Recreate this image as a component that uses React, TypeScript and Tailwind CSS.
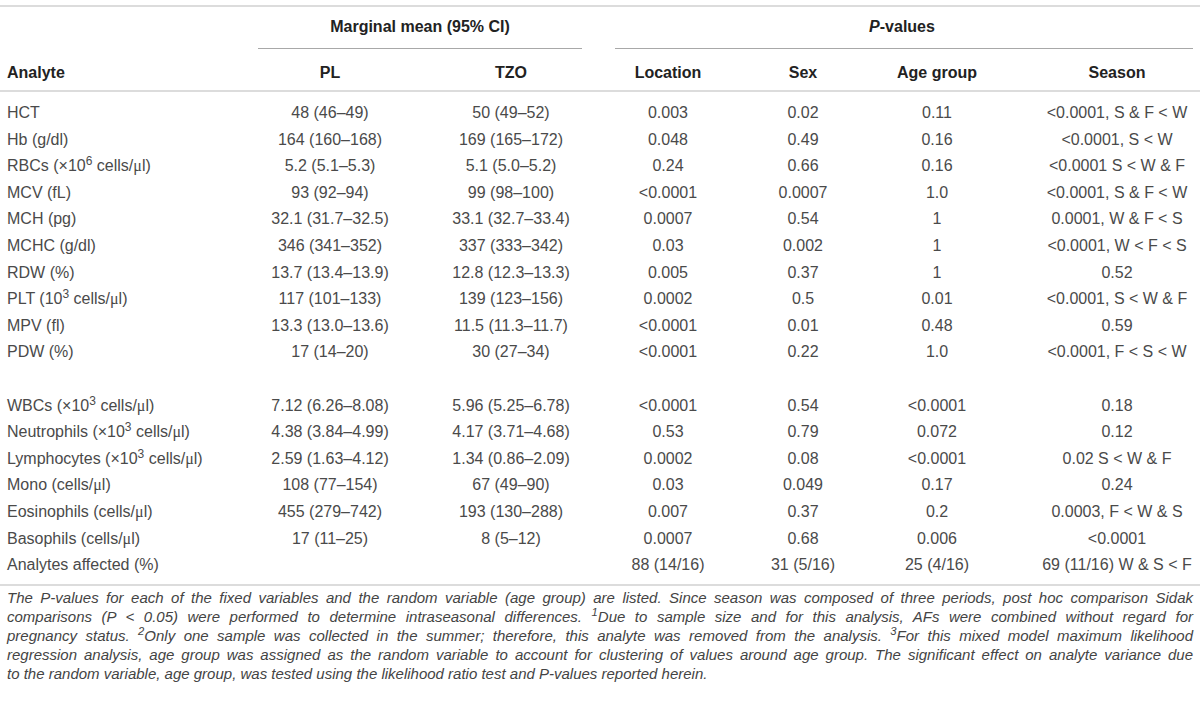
import React from "react";

const MU = () => <span className="font-['Liberation_Serif',serif]">μ</span>;

type Row = [React.ReactNode, string, string, string, string, string, string];

const rows1: Row[] = [
  ["HCT", "48 (46–49)", "50 (49–52)", "0.003", "0.02", "0.11", "<0.0001, S & F < W"],
  ["Hb (g/dl)", "164 (160–168)", "169 (165–172)", "0.048", "0.49", "0.16", "<0.0001, S < W"],
  [
    <>RBCs (×10<sup>6</sup> cells/<MU />l)</>,
    "5.2 (5.1–5.3)", "5.1 (5.0–5.2)", "0.24", "0.66", "0.16", "<0.0001 S < W & F",
  ],
  ["MCV (fL)", "93 (92–94)", "99 (98–100)", "<0.0001", "0.0007", "1.0", "<0.0001, S & F < W"],
  ["MCH (pg)", "32.1 (31.7–32.5)", "33.1 (32.7–33.4)", "0.0007", "0.54", "1", "0.0001, W & F < S"],
  ["MCHC (g/dl)", "346 (341–352)", "337 (333–342)", "0.03", "0.002", "1", "<0.0001, W < F < S"],
  ["RDW (%)", "13.7 (13.4–13.9)", "12.8 (12.3–13.3)", "0.005", "0.37", "1", "0.52"],
  [
    <>PLT (10<sup>3</sup> cells/<MU />l)</>,
    "117 (101–133)", "139 (123–156)", "0.0002", "0.5", "0.01", "<0.0001, S < W & F",
  ],
  ["MPV (fl)", "13.3 (13.0–13.6)", "11.5 (11.3–11.7)", "<0.0001", "0.01", "0.48", "0.59"],
  ["PDW (%)", "17 (14–20)", "30 (27–34)", "<0.0001", "0.22", "1.0", "<0.0001, F < S < W"],
];

const rows2: Row[] = [
  [
    <>WBCs (×10<sup>3</sup> cells/<MU />l)</>,
    "7.12 (6.26–8.08)", "5.96 (5.25–6.78)", "<0.0001", "0.54", "<0.0001", "0.18",
  ],
  [
    <>Neutrophils (×10<sup>3</sup> cells/<MU />l)</>,
    "4.38 (3.84–4.99)", "4.17 (3.71–4.68)", "0.53", "0.79", "0.072", "0.12",
  ],
  [
    <>Lymphocytes (×10<sup>3</sup> cells/<MU />l)</>,
    "2.59 (1.63–4.12)", "1.34 (0.86–2.09)", "0.0002", "0.08", "<0.0001", "0.02 S < W & F",
  ],
  [<>Mono (cells/<MU />l)</>, "108 (77–154)", "67 (49–90)", "0.03", "0.049", "0.17", "0.24"],
  [<>Eosinophils (cells/<MU />l)</>, "455 (279–742)", "193 (130–288)", "0.007", "0.37", "0.2", "0.0003, F < W & S"],
  [<>Basophils (cells/<MU />l)</>, "17 (11–25)", "8 (5–12)", "0.0007", "0.68", "0.006", "<0.0001"],
  ["Analytes affected (%)", "", "", "88 (14/16)", "31 (5/16)", "25 (4/16)", "69 (11/16) W & S < F"],
];

function DataRow({ r }: { r: Row }) {
  return (
    <div className="grid grid-cols-[208px_244px_118px_196px_74px_194px_166px] h-[26.6px] leading-[26.6px] whitespace-nowrap">
      <div className="pl-[7px]">{r[0]}</div>
      {r.slice(1).map((c, i) => (
        <div key={i} className="text-center">
          {c as string}
        </div>
      ))}
    </div>
  );
}

const footer: React.ReactNode[] = [
  <>The P-values for each of the fixed variables and the random variable (age group) are listed. Since season was composed of three periods, post hoc comparison Sidak</>,
  <>comparisons (P &lt; 0.05) were performed to determine intraseasonal differences. <sup>1</sup>Due to sample size and for this analysis, AFs were combined without regard for</>,
  <>pregnancy status. <sup>2</sup>Only one sample was collected in the summer; therefore, this analyte was removed from the analysis. <sup>3</sup>For this mixed model maximum likelihood</>,
  <>regression analysis, age group was assigned as the random variable to account for clustering of values around age group. The significant effect on analyte variance due</>,
];

export default function App() {
  return (
    <div className="w-[1200px] h-[701px] bg-white overflow-hidden font-['Liberation_Sans',Arial,sans-serif] text-[16px] text-[#4a4a4a]">
      <div className="pt-[5px]">
        <div className="border-t-2 border-[#dcdcdc]" />
        {/* group header */}
        <div className="grid grid-cols-[208px_244px_118px_196px_74px_194px_166px] h-[42px] font-bold text-[#222]">
          <div />
          <div className="col-span-2 flex flex-col justify-between">
            <div className="text-center pt-[10px] pl-[62px] leading-[20px]">Marginal mean (95% CI)</div>
            <div className="ml-[50px] mr-[-12px] border-b border-[#a8a8a8]" />
          </div>
          <div className="col-span-4 flex flex-col justify-between">
            <div className="text-center pt-[10px] pl-[34px] leading-[20px]">
              <span className="italic">P</span>-values
            </div>
            <div className="ml-[45px] mr-[7px] border-b border-[#a8a8a8]" />
          </div>
        </div>
        {/* column header */}
        <div className="grid grid-cols-[208px_244px_118px_196px_74px_194px_166px] pt-[14px] pb-[7px] leading-[20px] font-bold text-[#222]">
          <div className="pl-[7px]">Analyte</div>
          <div className="text-center">PL</div>
          <div className="text-center">TZO</div>
          <div className="text-center">Location</div>
          <div className="text-center">Sex</div>
          <div className="text-center">Age group</div>
          <div className="text-center">Season</div>
        </div>
        <div className="border-t-2 border-[#dcdcdc]" />
        <div className="pt-[8px] pb-[5px]">
          {rows1.map((r, i) => (
            <DataRow key={i} r={r} />
          ))}
          <div className="h-[26.6px]" />
          {rows2.map((r, i) => (
            <DataRow key={i} r={r} />
          ))}
        </div>
        <div className="border-t-2 border-[#dcdcdc]" />
        <div className="px-[7px] pt-[2px] italic text-[15px] leading-[19px] text-[#444]">
          {footer.map((l, i) => (
            <div key={i} className="text-justify [text-align-last:justify]">
              {l}
            </div>
          ))}
          <div>to the random variable, age group, was tested using the likelihood ratio test and P-values reported herein.</div>
        </div>
      </div>
    </div>
  );
}
